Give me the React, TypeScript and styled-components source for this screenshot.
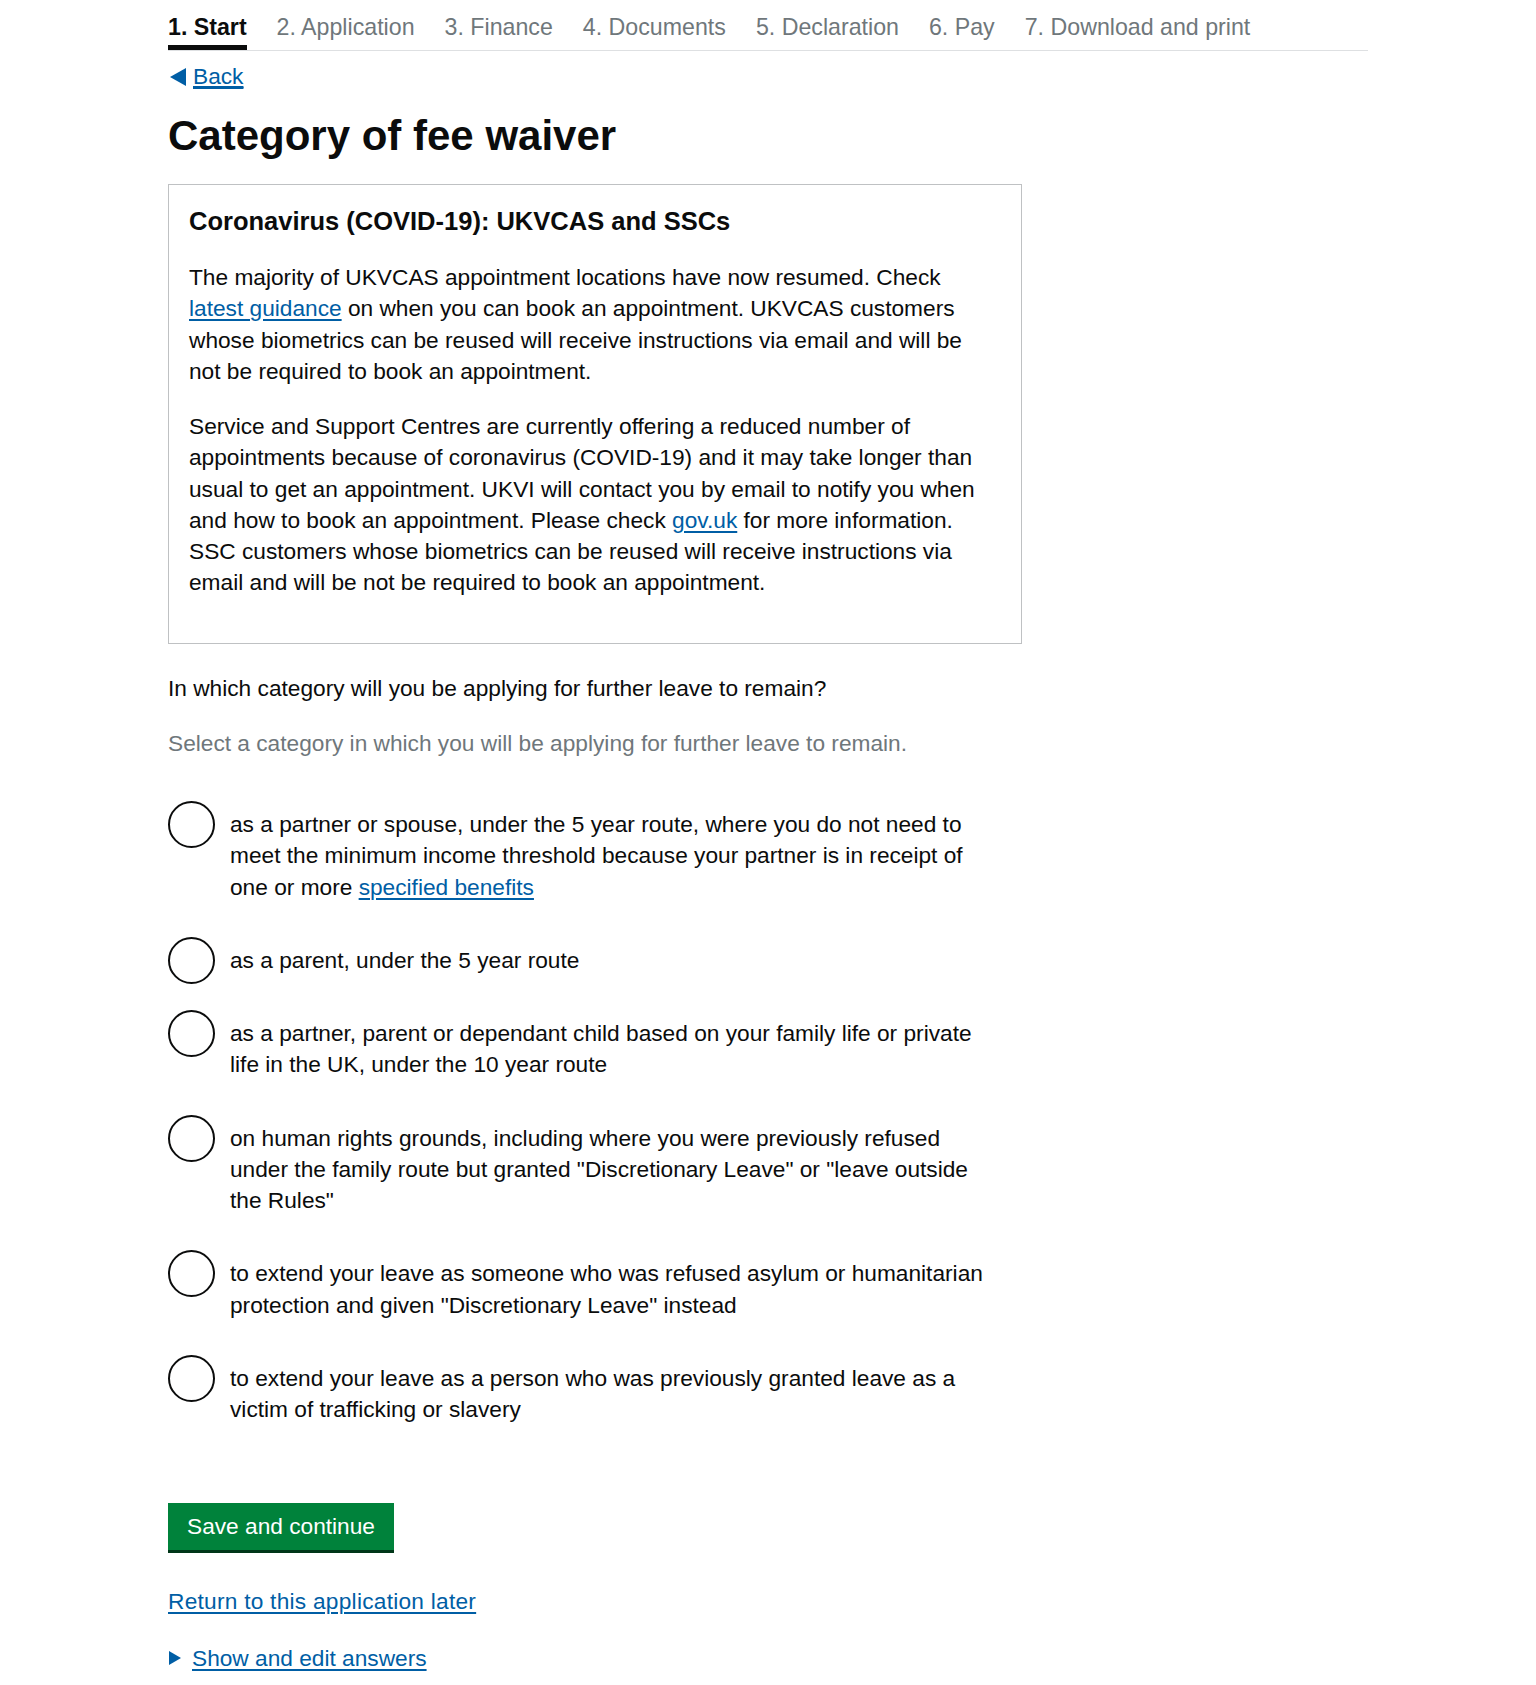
import React from "react";
import styled, { createGlobalStyle } from "styled-components";

const GlobalStyle = createGlobalStyle`
  body {
    margin: 0;
    background: #ffffff;
    color: #0b0c0c;
    font-family: "Liberation Sans", Arial, sans-serif;
    font-size: 22.7px;
    line-height: 31.25px;
  }
  * {
    box-sizing: border-box;
  }
`;

const Page = styled.div`
  width: 1200px;
  margin: 0 auto;
  padding-bottom: 20px;
`;

const StepNav = styled.ul`
  display: flex;
  margin: 0;
  padding: 0;
  list-style: none;
  border-bottom: 1px solid #dee0e2;
`;

const Step = styled.li<{ $active?: boolean }>`
  margin-right: 30px;
  padding: 12px 0 2px;
  font-size: 23.2px;
  line-height: 31px;
  color: ${(p) => (p.$active ? "#0b0c0c" : "#6f777b")};
  font-weight: ${(p) => (p.$active ? 700 : 400)};
  border-bottom: 5px solid ${(p) => (p.$active ? "#0b0c0c" : "transparent")};
`;

const Link = styled.a`
  color: #005ea5;
  text-decoration: underline;
  text-decoration-thickness: 2px;
  text-underline-offset: 3px;
`;

const BackLink = styled.a`
  display: flex;
  align-items: center;
  gap: 7px;
  width: max-content;
  margin-top: 10px;
  color: #005ea5;
  line-height: 31px;
  span {
    text-decoration: underline;
    text-decoration-thickness: 2px;
    text-underline-offset: 3px;
  }
`;

const LeftArrow = styled.i`
  display: block;
  width: 0;
  height: 0;
  margin-left: 2px;
  border-top: 9px solid transparent;
  border-bottom: 9px solid transparent;
  border-right: 16px solid #005ea5;
`;

const RightArrow = styled.i`
  display: block;
  width: 0;
  height: 0;
  margin-left: 1px;
  border-top: 7px solid transparent;
  border-bottom: 7px solid transparent;
  border-left: 12px solid #005ea5;
`;

const Heading = styled.h1`
  margin: 19px 0 23px;
  font-size: 42px;
  line-height: 50px;
  font-weight: 700;
`;

const NoticeBox = styled.div`
  width: 854px;
  padding: 20px 30px 20px 20px;
  border: 1px solid #bfc1c3;
`;

const NoticeTitle = styled.h2`
  margin: 0 0 25px;
  font-size: 25.5px;
  line-height: 32px;
  font-weight: 700;
`;

const Para = styled.p`
  margin: 0 0 24px;
  white-space: nowrap;
`;

const Question = styled.div`
  margin-top: 29px;
`;

const Hint = styled.div`
  margin-top: 24px;
  color: #6f777b;
`;

const RadioList = styled.div`
  display: flex;
  flex-direction: column;
  gap: 26px;
  margin-top: 42px;
  width: 854px;
`;

const RadioItem = styled.label`
  display: flex;
  align-items: flex-start;
`;

const RadioCircle = styled.span`
  flex-shrink: 0;
  width: 47px;
  height: 47px;
  border: 2.5px solid #0b0c0c;
  border-radius: 50%;
`;

const RadioLabel = styled.span`
  padding: 8px 0 8px 15px;
  white-space: nowrap;
`;

const SaveButton = styled.button`
  display: block;
  margin-top: 70px;
  height: 47px;
  padding: 0 19px;
  border: 0;
  border-radius: 0;
  background: #00823b;
  box-shadow: 0 3px 0 #003618;
  color: #ffffff;
  font-family: inherit;
  font-size: 22.7px;
  line-height: 47px;
  cursor: pointer;
`;

const ReturnLink = styled(Link)`
  display: block;
  width: max-content;
  margin-top: 36px;
  letter-spacing: 0.25px;
`;

const DetailsRow = styled.div`
  display: flex;
  align-items: center;
  gap: 11px;
  margin-top: 25px;
`;

const steps = [
  "1. Start",
  "2. Application",
  "3. Finance",
  "4. Documents",
  "5. Declaration",
  "6. Pay",
  "7. Download and print",
];

function radioOptions(): React.ReactNode[] {
  return [
    <>
      as a partner or spouse, under the 5 year route, where you do not need to
      <br />
      meet the minimum income threshold because your partner is in receipt of
      <br />
      one or more <Link href="#">specified benefits</Link>
    </>,
    <>as a parent, under the 5 year route</>,
    <>
      as a partner, parent or dependant child based on your family life or
      private
      <br />
      life in the UK, under the 10 year route
    </>,
    <>
      on human rights grounds, including where you were previously refused
      <br />
      under the family route but granted "Discretionary Leave" or "leave
      outside
      <br />
      the Rules"
    </>,
    <>
      to extend your leave as someone who was refused asylum or humanitarian
      <br />
      protection and given "Discretionary Leave" instead
    </>,
    <>
      to extend your leave as a person who was previously granted leave as a
      <br />
      victim of trafficking or slavery
    </>,
  ];
}

export default function App() {
  const options = radioOptions();
  return (
    <>
      <GlobalStyle />
      <Page>
        <StepNav>
          {steps.map((s, i) => (
            <Step key={s} $active={i === 0}>
              {s}
            </Step>
          ))}
        </StepNav>

        <BackLink href="#">
          <LeftArrow />
          <span>Back</span>
        </BackLink>

        <Heading>Category of fee waiver</Heading>

        <NoticeBox>
          <NoticeTitle>Coronavirus (COVID-19): UKVCAS and SSCs</NoticeTitle>
          <Para>
            The majority of UKVCAS appointment locations have now resumed. Check
            <br />
            <Link href="#">latest guidance</Link> on when you can book an
            appointment. UKVCAS customers
            <br />
            whose biometrics can be reused will receive instructions via email
            and will be
            <br />
            not be required to book an appointment.
          </Para>
          <Para>
            Service and Support Centres are currently offering a reduced number
            of
            <br />
            appointments because of coronavirus (COVID-19) and it may take
            longer than
            <br />
            usual to get an appointment. UKVI will contact you by email to
            notify you when
            <br />
            and how to book an appointment. Please check{" "}
            <Link href="#">gov.uk</Link> for more information.
            <br />
            SSC customers whose biometrics can be reused will receive
            instructions via
            <br />
            email and will be not be required to book an appointment.
          </Para>
        </NoticeBox>

        <Question>
          In which category will you be applying for further leave to remain?
        </Question>
        <Hint>
          Select a category in which you will be applying for further leave to
          remain.
        </Hint>

        <RadioList>
          {options.map((o, i) => (
            <RadioItem key={i}>
              <RadioCircle />
              <RadioLabel>{o}</RadioLabel>
            </RadioItem>
          ))}
        </RadioList>

        <SaveButton>Save and continue</SaveButton>

        <ReturnLink href="#">Return to this application later</ReturnLink>

        <DetailsRow>
          <RightArrow />
          <Link href="#">Show and edit answers</Link>
        </DetailsRow>
      </Page>
    </>
  );
}
